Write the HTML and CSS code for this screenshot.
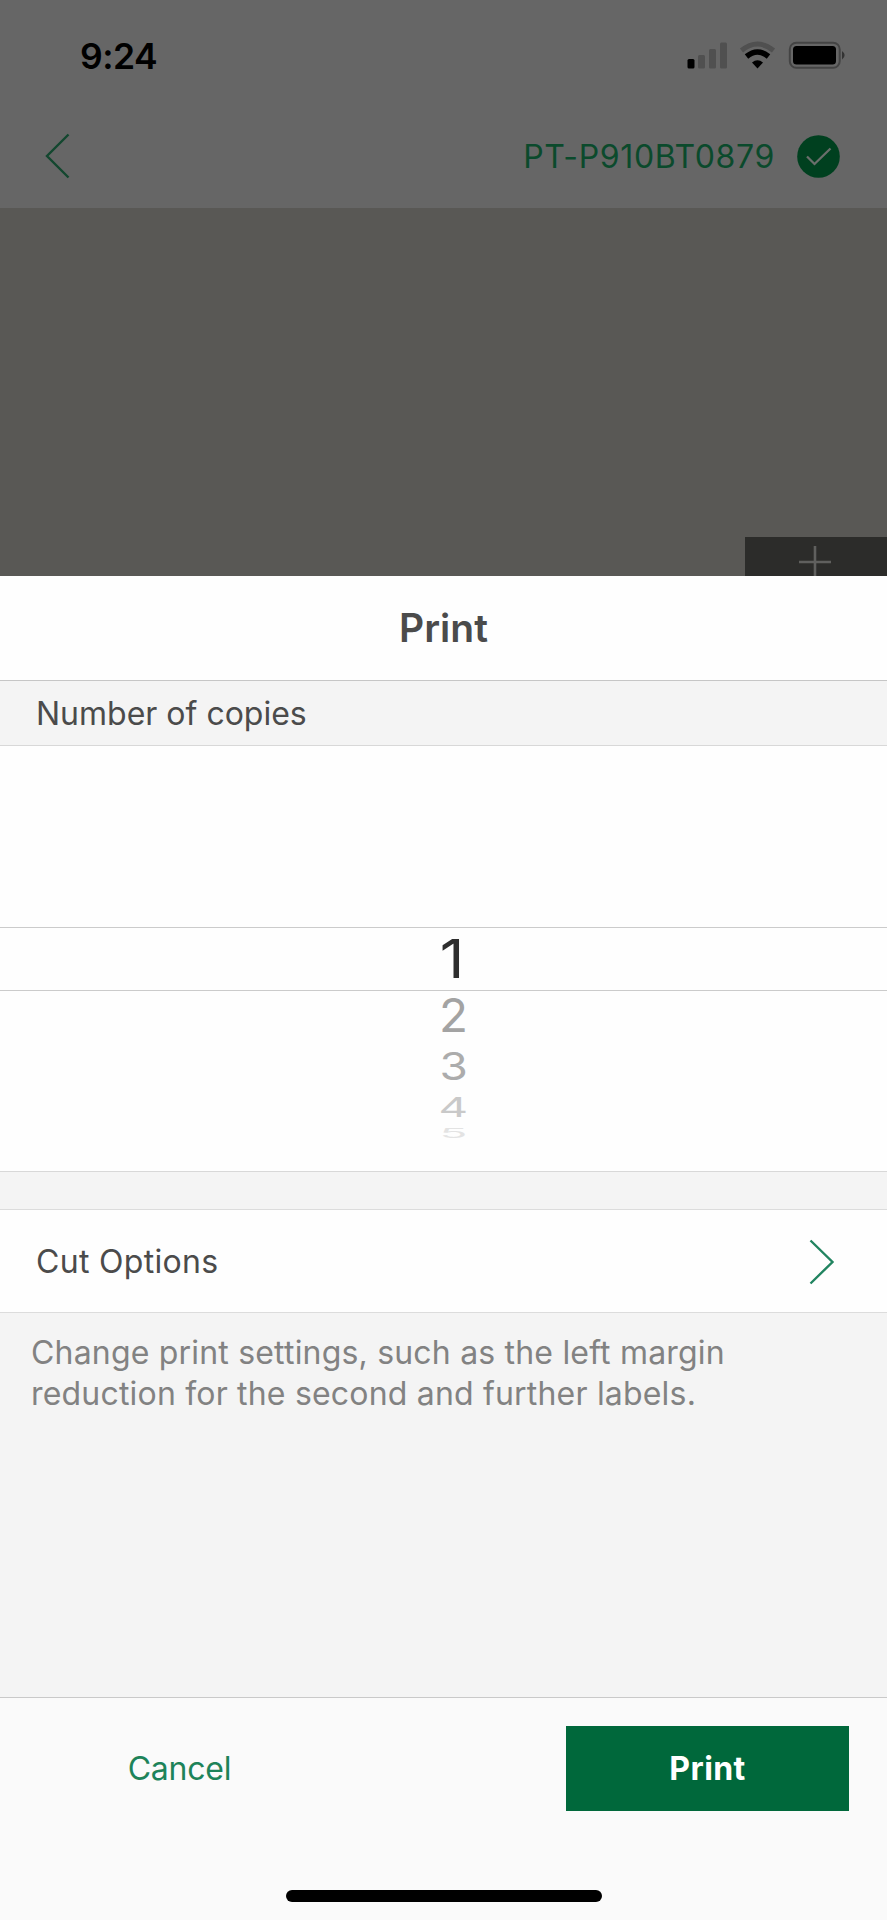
FILE: index.html
```
<!DOCTYPE html>
<html lang="en">
<head>
    <meta charset="UTF-8">
    <meta name="viewport" content="width=device-width, initial-scale=1.0">
    <title>Print</title>
    <link rel="stylesheet" href="styles.css">
</head>
<body>
    <div class="screen">
        <header class="top">
            <div class="status-bar">
                <span class="time">9:24</span>
                <svg class="status-icons" width="160" height="30" viewBox="0 0 160 30">
                    <rect x="1.500" y="18" width="7" height="9.500" rx="1.500" fill="#000"/>
                    <g fill="#505050">
                        <rect x="12" y="14" width="7" height="13.500" rx="1.500"/>
                        <rect x="23" y="8" width="7" height="19.500" rx="1.500"/>
                        <rect x="34" y="1.500" width="7" height="26" rx="1.500"/>
                    </g>
                    <path d="M55.500 9.500Q71.500 -3.500 87.500 9.500" fill="none" stroke="#505050" stroke-width="5"/>
                    <path d="M60.500 15.500Q71.500 6.500 82.500 15.500" fill="none" stroke="#000" stroke-width="5.500"/>
                    <path d="M66 21.500Q71.500 17 77 21.500L71.500 27.500Z" fill="#000"/>
                    <rect x="103.800" y="1.700" width="49.900" height="25.100" rx="6.500" fill="none" stroke="#444" stroke-width="2"/>
                    <rect x="107" y="5" width="43" height="18.500" rx="3.500" fill="#000"/>
                    <path d="M156 10Q161.500 14.300 156 18.500Z" fill="#333"/>
                </svg>
            </div>
            <nav class="nav-bar">
                <svg class="back" width="28" height="48" viewBox="0 0 28 48">
                    <path d="M25.500 2.500L4 24L25.500 45.500" fill="none" stroke="#13472f" stroke-width="2.400"/>
                </svg>
                <div class="printer">
                    <span class="printer-name">PT-P910BT0879</span>
                    <svg width="43" height="43" viewBox="0 0 43 43">
                        <circle cx="21.500" cy="21.500" r="21.300" fill="#00401f"/>
                        <path d="M10 21.500L17.500 29L33.500 13.500" fill="none" stroke="#6a6e6b" stroke-width="2.300"/>
                    </svg>
                </div>
            </nav>
        </header>

        <div class="preview">
            <div class="add-button">
                <svg width="32" height="32" viewBox="0 0 32 32">
                    <path d="M16 0V32M0 16H32" stroke="#60605e" stroke-width="2.600"/>
                </svg>
            </div>
        </div>

        <main class="sheet">
            <h1 class="sheet-title">Print</h1>
            <h2 class="section-title">Number of copies</h2>
            <div class="picker">
                <div class="pick selected"><span>1</span></div>
                <div class="pick near"><span>2</span></div>
                <div class="pick mid"><span>3</span></div>
                <div class="pick far"><span>4</span></div>
                <div class="pick last"><span>5</span></div>
            </div>
            <div class="option">
                <span class="option-name">Cut Options</span>
                <svg width="28" height="48" viewBox="0 0 28 48">
                    <path d="M2.500 2.500L24.500 24L2.500 45.500" fill="none" stroke="#218460" stroke-width="2.400"/>
                </svg>
            </div>
            <p class="note">Change print settings, such as the left margin<br>reduction for the second and further labels.</p>
        </main>

        <footer class="actions">
            <div class="buttons">
                <button class="cancel">Cancel</button>
                <button class="print">Print</button>
            </div>
            <div class="home-indicator"></div>
        </footer>
    </div>
</body>
</html>
```
FILE: styles.css
```
* {
    box-sizing: border-box;
}
body {
    margin: 0;
    font-family: Inter, "Liberation Sans", sans-serif;
    font-size: 32px;
    color: #4b4b4b;
}
svg {
    display: block;
    flex: none;
    overflow: visible;
}
.screen {
    width: 887px;
    height: 1920px;
    display: flex;
    flex-direction: column;
    overflow: hidden;
    background: #f4f4f4;
}
.top {
    height: 208px;
    background: #666;
}
.status-bar {
    height: 112px;
    padding: 0 41px 0 80px;
    display: flex;
    justify-content: space-between;
    align-items: center;
}
.time {
    padding-top: 1px;
    font-size: 35.5px;
    font-weight: 600;
    letter-spacing: -0.5px;
    color: #000;
}
.nav-bar {
    height: 88px;
    padding: 0 47px 0 43px;
    display: flex;
    justify-content: space-between;
    align-items: center;
}
.printer {
    display: flex;
    align-items: center;
    gap: 22px;
}
.printer-name {
    color: #0b4a2c;
    letter-spacing: 0.65px;
    white-space: nowrap;
}
.preview {
    height: 368px;
    background: #595855;
    display: flex;
    justify-content: flex-end;
    align-items: flex-end;
}
.add-button {
    width: 142px;
    height: 39px;
    padding: 9px 0 0 54px;
    background: #2c2c2a;
    overflow: hidden;
}
.sheet {
    flex: 1;
}
.sheet-title {
    height: 105px;
    margin: 0;
    background: #fefefe;
    border-bottom: 1px solid #c6c6c6;
    color: #4b4b4b;
    font-size: 39px;
    font-weight: 600;
    line-height: 104px;
    text-align: center;
}
.section-title {
    height: 65px;
    margin: 0;
    padding-left: 36px;
    border-bottom: 1px solid #d8d8d8;
    font-size: 32px;
    font-weight: 400;
    line-height: 65px;
}
.picker {
    height: 426px;
    padding: 181px 0 0 20px;
    background: #fefefe;
    border-bottom: 1px solid #d8d8d8;
}
.pick {
    display: flex;
    justify-content: center;
    align-items: center;
    font-size: 54px;
    line-height: 1;
    color: #a3a3a3;
}
.pick span {
    display: block;
}
.selected {
    height: 64px;
    margin-left: -20px;
    padding-left: 17px;
    border-top: 1px solid #cbcbcb;
    border-bottom: 1px solid #cbcbcb;
    color: #2e2e2e;
}
.selected span {
    transform: scale(1.12, 1);
}
.near {
    height: 49px;
}
.near span {
    transform: scale(0.88, 0.86);
}
.mid {
    height: 53px;
    color: #acacac;
}
.mid span {
    transform: scale(0.85, 0.71);
}
.far {
    height: 28px;
    color: #c9c9c9;
}
.far span {
    transform: scale(0.85, 0.51);
}
.last {
    height: 24px;
    color: #e3e3e3;
}
.last span {
    transform: scale(0.85, 0.25);
}
.option {
    height: 104px;
    margin-top: 37px;
    padding: 1px 51px 0 36px;
    display: flex;
    justify-content: space-between;
    align-items: center;
    background: #fefefe;
    border-top: 1px solid #dcdcdc;
    border-bottom: 1px solid #dcdcdc;
}
.option-name {
    letter-spacing: 0.3px;
}
.note {
    margin: 20px 0 0 31px;
    color: #828282;
    letter-spacing: 0.19px;
    line-height: 40.5px;
    white-space: nowrap;
}
.actions {
    height: 223px;
    padding-top: 28px;
    background: #fafafa;
    border-top: 1px solid #c9c9c9;
}
.buttons {
    display: flex;
    justify-content: space-between;
    padding: 0 38px;
}
button {
    width: 283px;
    height: 85px;
    padding: 0;
    border: none;
    background: none;
    font-family: inherit;
    font-size: 32px;
}
.cancel {
    color: #1d8359;
    letter-spacing: -0.2px;
}
.print {
    background: #00683b;
    color: #fff;
    font-weight: 700;
    letter-spacing: 0.4px;
}
.home-indicator {
    width: 316px;
    height: 12px;
    margin: 79px auto 0;
    border-radius: 6px;
    background: #000;
}
```
